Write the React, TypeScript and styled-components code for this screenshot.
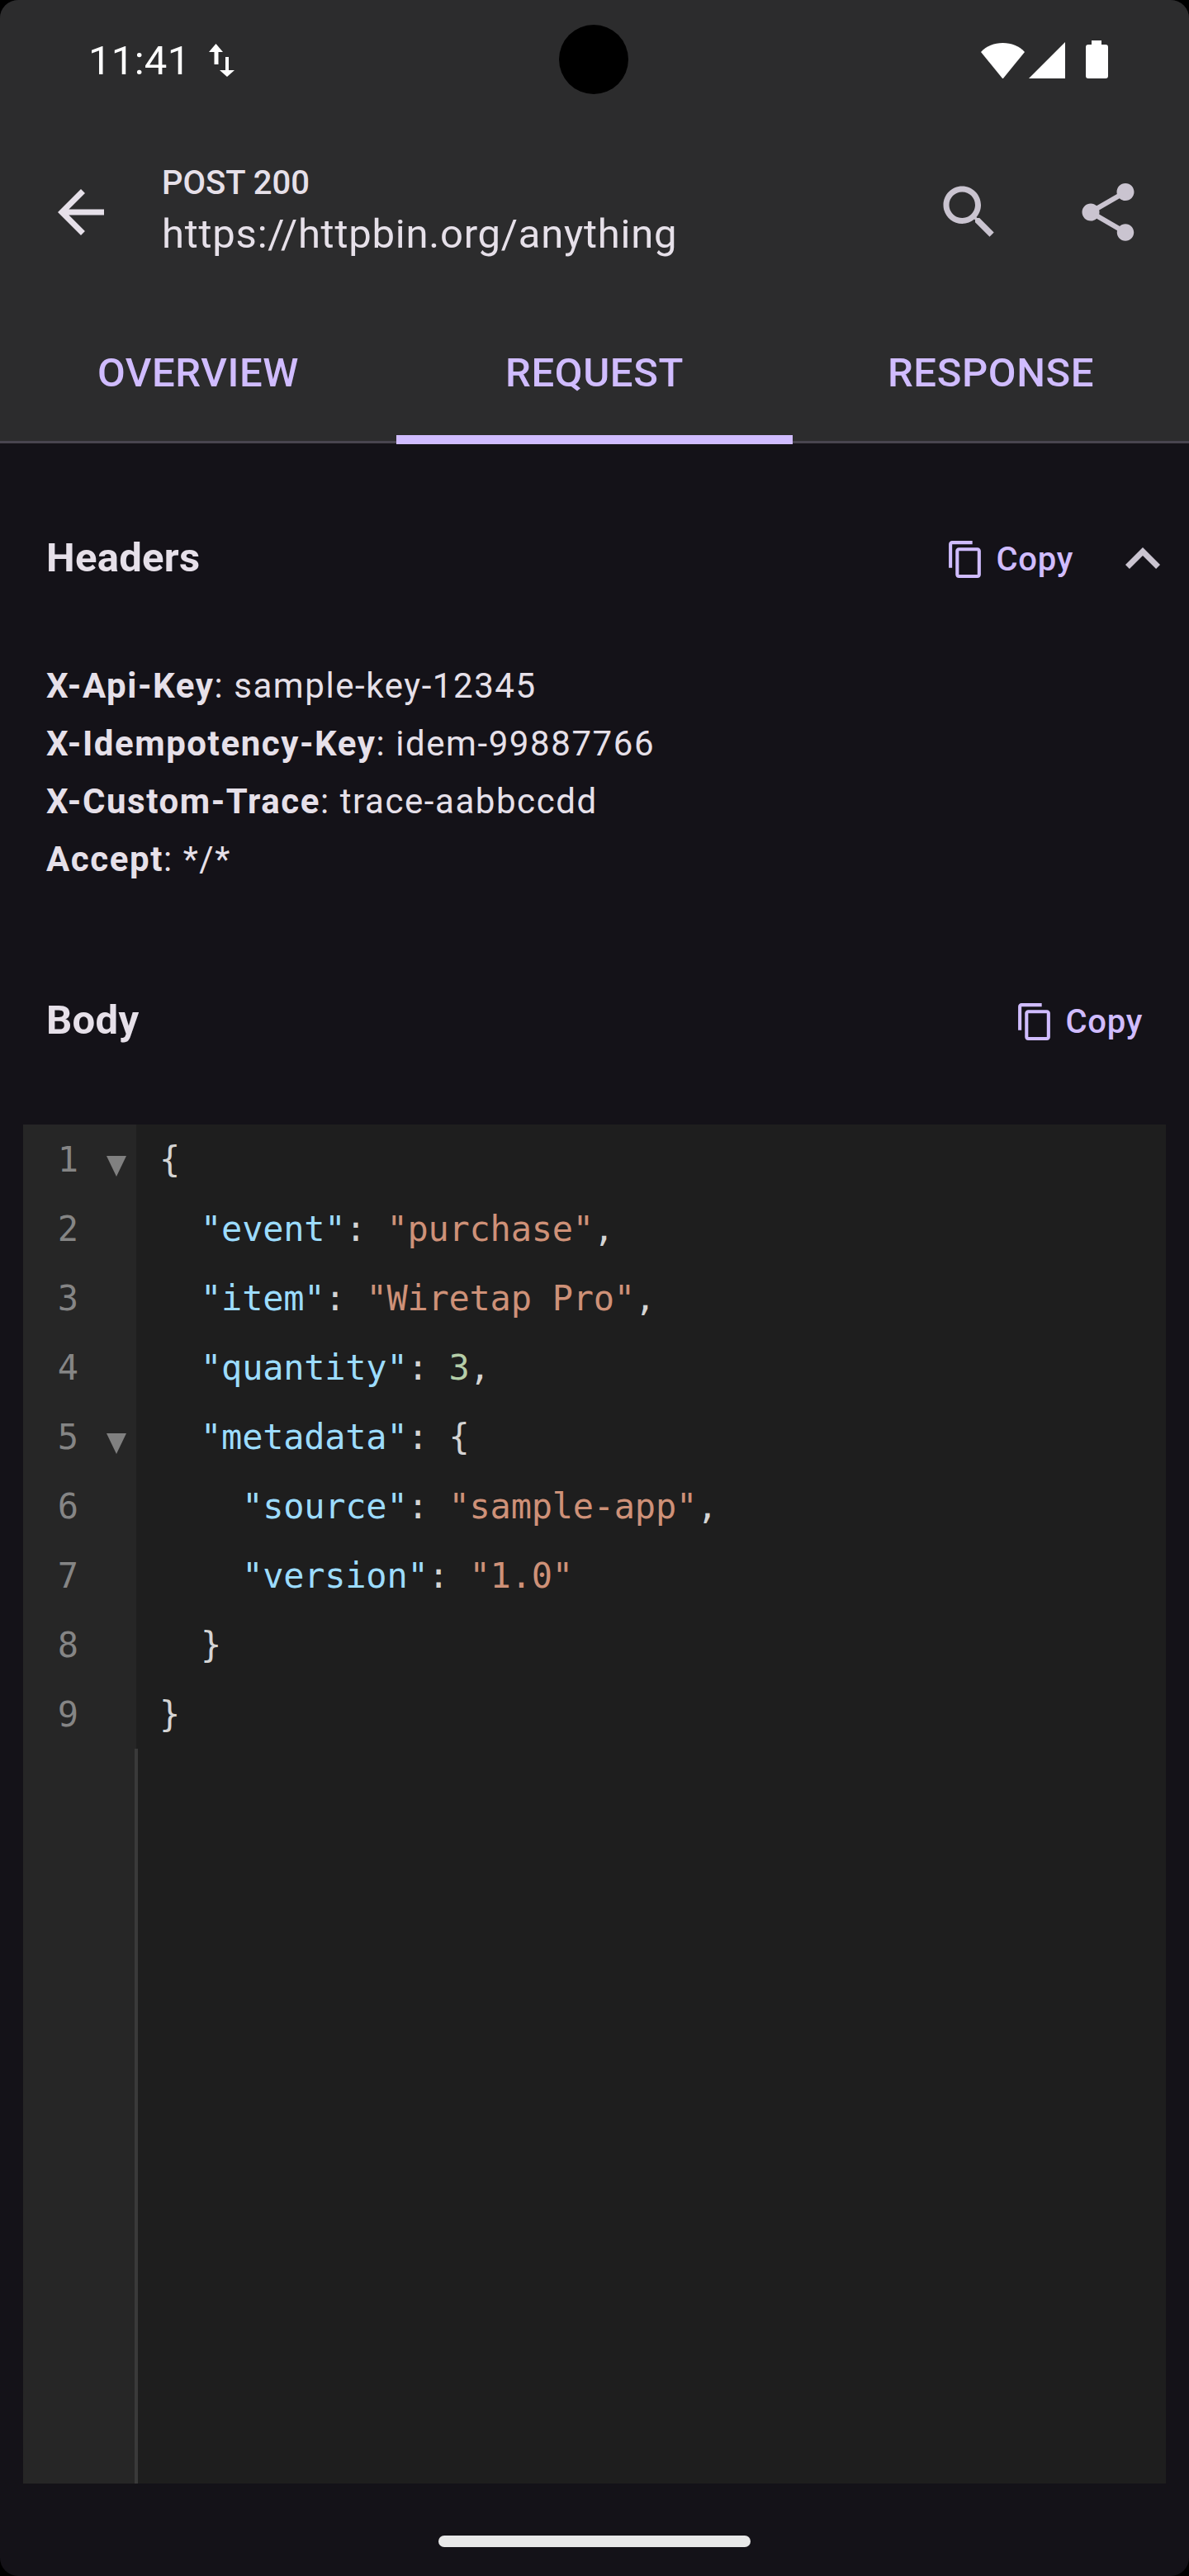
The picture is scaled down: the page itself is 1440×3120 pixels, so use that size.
import React from "react";
import styled, { createGlobalStyle } from "styled-components";

const Global = createGlobalStyle`
  html, body { margin: 0; padding: 0; background: #000; }
  #root { width: 1440px; height: 3120px; }
  * { box-sizing: border-box; }
`;

const Screen = styled.div`
  width: 1440px;
  height: 3120px;
  display: flex;
  flex-direction: column;
  background: #141218;
  border-radius: 22px;
  overflow: hidden;
  font-family: Roboto, "Noto Sans", sans-serif;
`;

const Header = styled.header`
  background: #2c2c2d;
  display: flex;
  flex-direction: column;
  flex: none;
`;

const StatusBar = styled.div`
  position: relative;
  height: 145px;
  display: flex;
  align-items: flex-start;
  justify-content: space-between;
  padding: 49px 98px 0 107px;
`;

const Clock = styled.div`
  display: flex;
  align-items: flex-start;
  gap: 22px;
  color: #fff;
  font-size: 49px;
  line-height: 46px;
  letter-spacing: 0.3px;
`;

const ClockText = styled.span`
  display: block;
  padding-top: 2px;
`;

const DataArrows = styled.svg`
  display: block;
  margin-top: 4px;
`;

const Camera = styled.div`
  position: absolute;
  left: 677px;
  top: 30px;
  width: 84px;
  height: 84px;
  border-radius: 50%;
  background: #000;
`;

const StatusIcons = styled.div`
  display: flex;
  align-items: flex-end;
  height: 46px;
`;

const StatusGlyph = styled.svg<{ $gap?: number }>`
  display: block;
  margin-left: ${(p) => p.$gap ?? 0}px;
`;

const Toolbar = styled.div`
  height: 224px;
  display: flex;
  align-items: center;
  padding: 0 14px;
`;

const IconButton = styled.button`
  width: 168px;
  height: 168px;
  flex: none;
  display: flex;
  align-items: center;
  justify-content: center;
  background: none;
  border: 0;
  padding: 0;
`;

const Titles = styled.div`
  flex: 1;
  min-width: 0;
  display: flex;
  flex-direction: column;
  color: #e6e0e9;
  padding: 4px 0 0 14px;
`;

const Overline = styled.div`
  font-size: 40px;
  line-height: 46px;
  font-weight: 500;
  margin-bottom: 4px;
`;

const Url = styled.div`
  font-size: 49px;
  line-height: 70px;
  letter-spacing: 0.76px;
`;

const Tabs = styled.nav`
  height: 168px;
  display: grid;
  grid-template-columns: repeat(3, 1fr);
  border-bottom: 3.5px solid #49454f;
`;

const Tab = styled.div<{ $active?: boolean }>`
  position: relative;
  display: flex;
  align-items: center;
  justify-content: center;
  color: #d0bcff;
  font-size: 49px;
  font-weight: 500;
  letter-spacing: 0.6px;
  &::after {
    content: "";
    display: ${(p) => (p.$active ? "block" : "none")};
    position: absolute;
    left: 0;
    right: 0;
    bottom: -3.5px;
    height: 11px;
    background: #d0bcff;
  }
`;

const Content = styled.main`
  flex: 1;
  min-height: 0;
  display: flex;
  flex-direction: column;
`;

const SectionRow = styled.div<{ $top: number; $bottom: number; $right: number }>`
  height: 84px;
  flex: none;
  display: flex;
  align-items: center;
  justify-content: space-between;
  margin: ${(p) => p.$top}px ${(p) => p.$right}px ${(p) => p.$bottom}px 56px;
`;

const SectionTitle = styled.h2`
  margin: 0;
  padding-bottom: 3px;
  color: #e6e0e9;
  font-size: 49px;
  font-weight: 700;
  letter-spacing: 0.3px;
`;

const Actions = styled.div`
  display: flex;
  align-items: center;
`;

const CopyButton = styled.button`
  display: flex;
  align-items: center;
  gap: 13px;
  background: none;
  border: 0;
  padding: 0;
  color: #d0bcff;
  font-family: inherit;
  font-size: 40px;
  font-weight: 500;
  letter-spacing: 0.7px;
`;

const Chevron = styled.span`
  display: flex;
  width: 84px;
  margin-left: 42px;
`;

const HeaderList = styled.div`
  flex: none;
  margin-left: 56px;
  color: #e6e0e9;
  font-size: 42px;
  line-height: 70px;
  letter-spacing: 1.57px;
  b {
    font-weight: 700;
  }
`;

const Editor = styled.section`
  flex: 1;
  min-height: 0;
  display: flex;
  margin: 0 28px;
  background: #1e1e1e;
  font-family: "DejaVu Sans Mono", "Liberation Mono", monospace;
  font-size: 42px;
  line-height: 84px;
`;

const Gutter = styled.div`
  width: 137px;
  flex: none;
  display: flex;
  flex-direction: column;
  background: #262626;
  color: #858585;
`;

const GutterRow = styled.div`
  height: 84px;
  display: flex;
  align-items: center;
`;

const LineNumber = styled.span`
  width: 67px;
  padding-top: 1px;
  text-align: right;
`;

const Fold = styled.span`
  width: 24px;
  height: 25px;
  margin: 16px 0 0 34px;
  color: #808080;
  display: flex;
`;

const GutterRest = styled.div`
  position: relative;
  flex: 1;
  &::after {
    content: "";
    position: absolute;
    top: 0;
    bottom: 0;
    right: -2px;
    width: 4px;
    background: #3a3a3a;
  }
`;

const Code = styled.pre`
  margin: 0;
  padding: 1px 0 0 28px;
  font: inherit;
  letter-spacing: -0.25px;
  color: #d4d4d4;
`;

const Line = styled.div`
  height: 84px;
  white-space: pre;
`;

const Key = styled.span`
  color: #9cdcfe;
`;
const Str = styled.span`
  color: #ce9178;
`;
const Num = styled.span`
  color: #b5cea8;
`;

const NavBar = styled.div`
  height: 112px;
  flex: none;
  display: flex;
  justify-content: center;
  padding-top: 63px;
`;

const HomeHandle = styled.div`
  width: 378px;
  height: 14px;
  border-radius: 7px;
  background: #e8e8e8;
`;

const Icon = ({ d, color, size = 84 }: { d: string; color: string; size?: number }) => (
  <svg width={size} height={size} viewBox="0 0 24 24" fill={color}>
    <path d={d} />
  </svg>
);

const COPY =
  "M16 1H4c-1.1 0-2 .9-2 2v14h2V3h12V1zm3 4H8c-1.1 0-2 .9-2 2v14c0 1.1.9 2 2 2h11c1.1 0 2-.9 2-2V7c0-1.1-.9-2-2-2zm0 16H8V7h11v14z";

const Copy = () => (
  <CopyButton>
    <Icon d={COPY} color="#d0bcff" size={49} />
    Copy
  </CopyButton>
);

const foldLines = [1, 5];

export default function App() {
  return (
    <Screen>
      <Global />
      <Header>
        <StatusBar>
          <Clock>
            <ClockText>11:41</ClockText>
            <DataArrows width="31" height="40" viewBox="0 0 31 40" fill="#fff">
              <path d="M8.500 0 17 10H11.500V25H6.500V10H0ZM20 16H24V32H31L22 40 13 32H20Z" />
            </DataArrows>
          </Clock>
          <Camera />
          <StatusIcons>
            <StatusGlyph width="53" height="43.500" viewBox="0 0 53 43.500" fill="#fff">
              <path d="M0 11C7 3.500 16 0 26.500 0S46 3.500 53 11L26.500 43.500Z" />
            </StatusGlyph>
            <StatusGlyph $gap={5} width="44" height="44" viewBox="0 0 44 44" fill="#fff">
              <path d="M44 0V44H0Z" />
            </StatusGlyph>
            <StatusGlyph $gap={25} width="27" height="46" viewBox="0 0 27 46" fill="#fff">
              <path d="M7 0H19V5H24Q27 5 27 8V43Q27 46 24 46H3Q0 46 0 43V8Q0 5 3 5H7Z" />
            </StatusGlyph>
          </StatusIcons>
        </StatusBar>
        <Toolbar>
          <IconButton>
            <Icon d="M20 11H7.830l5.590-5.590L12 4l-8 8 8 8 1.410-1.410L7.830 13H20v-2z" color="#e6e0e9" />
          </IconButton>
          <Titles>
            <Overline>POST 200</Overline>
            <Url>https://httpbin.org/anything</Url>
          </Titles>
          <IconButton>
            <Icon
              d="M15.5 14h-.79l-.28-.27C15.41 12.59 16 11.11 16 9.5 16 5.91 13.090 3 9.500 3S3 5.910 3 9.500 5.910 16 9.500 16c1.610 0 3.090-.59 4.230-1.570l.27.28v.79l5 4.990L20.490 19l-4.990-5zm-6 0C7.010 14 5 11.990 5 9.500S7.010 5 9.500 5 14 7.010 14 9.500 11.990 14 9.500 14z"
              color="#cac4d0"
            />
          </IconButton>
          <IconButton>
            <Icon
              d="M18 16.080c-.76 0-1.440.3-1.960.77L8.910 12.700c.05-.23.090-.46.090-.7s-.04-.47-.09-.7l7.050-4.110c.54.5 1.250.81 2.040.81 1.660 0 3-1.340 3-3s-1.340-3-3-3-3 1.340-3 3c0 .24.040.47.090.7L8.040 9.810C7.500 9.310 6.790 9 6 9c-1.660 0-3 1.340-3 3s1.340 3 3 3c.79 0 1.500-.31 2.040-.81l7.120 4.160c-.05.21-.08.43-.08.650 0 1.610 1.310 2.920 2.920 2.920s2.920-1.310 2.920-2.920-1.310-2.920-2.920-2.920z"
              color="#cac4d0"
            />
          </IconButton>
        </Toolbar>
        <Tabs>
          <Tab>OVERVIEW</Tab>
          <Tab $active>REQUEST</Tab>
          <Tab>RESPONSE</Tab>
        </Tabs>
      </Header>
      <Content>
        <SectionRow $top={98} $bottom={77} $right={14}>
          <SectionTitle>Headers</SectionTitle>
          <Actions>
            <Copy />
            <Chevron>
              <Icon d="M12 8l-6 6 1.410 1.410L12 10.830l4.590 4.580L18 14z" color="#cac4d0" />
            </Chevron>
          </Actions>
        </SectionRow>
        <HeaderList>
          <div><b>X-Api-Key</b>: sample-key-12345</div>
          <div><b>X-Idempotency-Key</b>: idem-99887766</div>
          <div><b>X-Custom-Trace</b>: trace-aabbccdd</div>
          <div><b>Accept</b>: */*</div>
        </HeaderList>
        <SectionRow $top={119} $bottom={83} $right={56}>
          <SectionTitle>Body</SectionTitle>
          <Actions>
            <Copy />
          </Actions>
        </SectionRow>
        <Editor>
          <Gutter>
            {[1, 2, 3, 4, 5, 6, 7, 8, 9].map((n) => (
              <GutterRow key={n}>
                <LineNumber>{n}</LineNumber>
                {foldLines.includes(n) && (
                  <Fold>
                    <svg width="24" height="25" viewBox="0 0 24 25" fill="currentColor">
                      <path d="M0 0H24L12 25Z" />
                    </svg>
                  </Fold>
                )}
              </GutterRow>
            ))}
            <GutterRest />
          </Gutter>
          <Code>
            <Line>{"{"}</Line>
            <Line>{"  "}<Key>"event"</Key>: <Str>"purchase"</Str>,</Line>
            <Line>{"  "}<Key>"item"</Key>: <Str>"Wiretap Pro"</Str>,</Line>
            <Line>{"  "}<Key>"quantity"</Key>: <Num>3</Num>,</Line>
            <Line>{"  "}<Key>"metadata"</Key>: {"{"}</Line>
            <Line>{"    "}<Key>"source"</Key>: <Str>"sample-app"</Str>,</Line>
            <Line>{"    "}<Key>"version"</Key>: <Str>"1.0"</Str></Line>
            <Line>{"  }"}</Line>
            <Line>{"}"}</Line>
          </Code>
        </Editor>
      </Content>
      <NavBar>
        <HomeHandle />
      </NavBar>
    </Screen>
  );
}
